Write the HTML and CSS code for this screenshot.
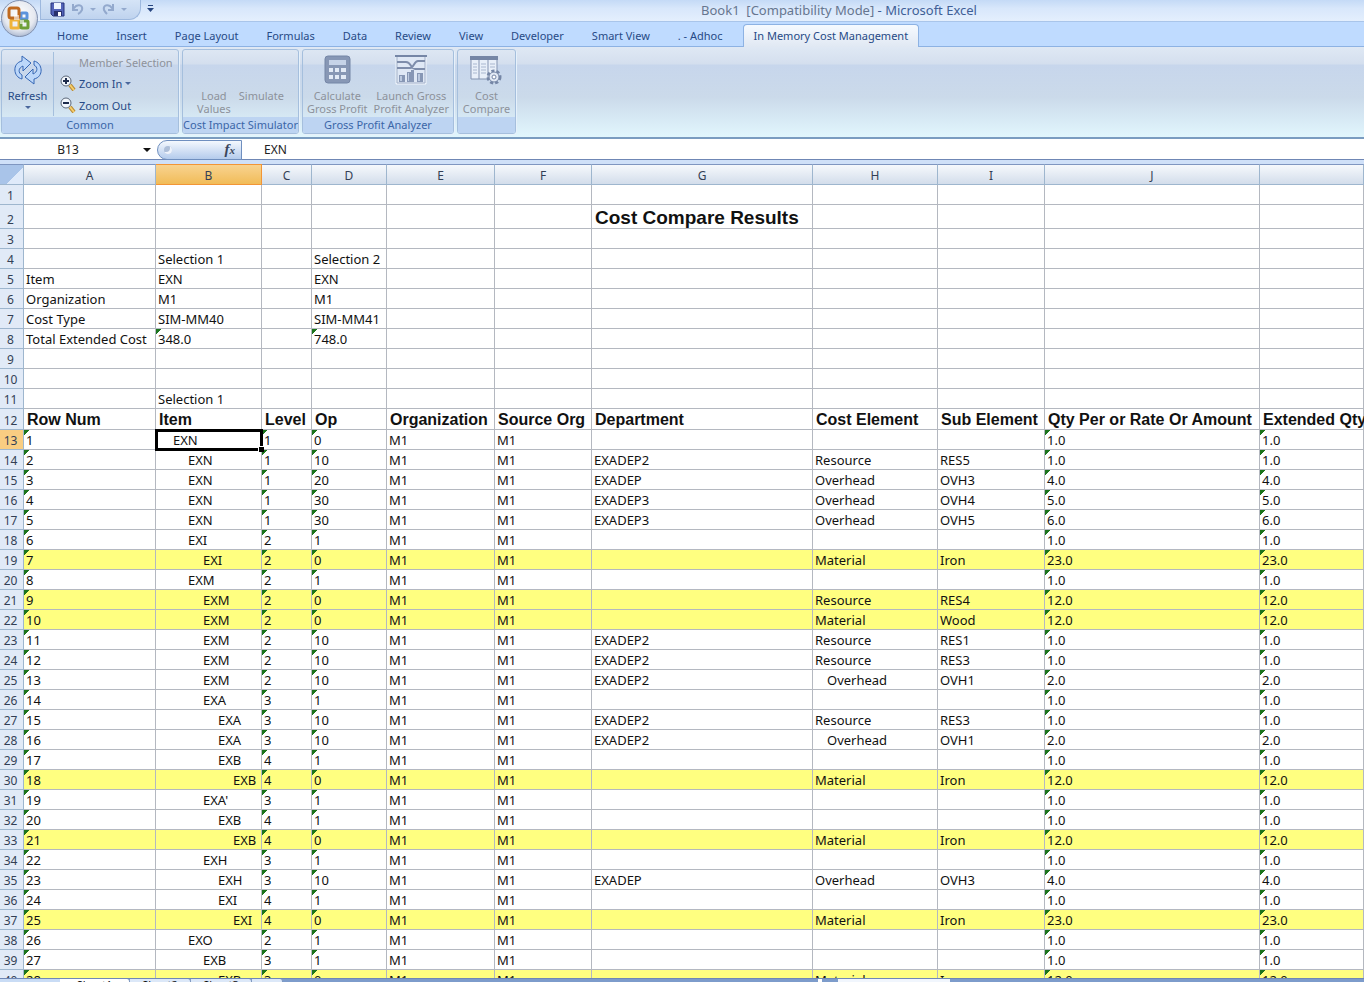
FILE: index.html
```html
<!DOCTYPE html>
<html lang="en">
<head>
    <meta charset="UTF-8">
    <meta name="viewport" content="width=device-width, initial-scale=1.0">
    <title>Book1 [Compatibility Mode] - Microsoft Excel</title>
    <link rel="stylesheet" href="styles.css">
    <script src="sheet.js" defer></script>
</head>
<body>
    <header class="titlebar">
        <div class="quick-access">
            <button class="icon-button" aria-label="Save">
                <svg width="15" height="15" viewBox="0 0 15 15">
                    <path d="M1 1h13v13H3l-2-2z" fill="#5263b8" stroke="#26337c"/>
                    <path d="M4 1h7v6H4z" fill="#eef4ff"/>
                    <path d="M4 9h8v5H4z" fill="#28306c"/>
                    <path d="M8 10h3v4H8z" fill="#fff"/>
                </svg>
            </button>
            <button class="icon-button" aria-label="Undo">
                <svg width="13" height="13" viewBox="0 0 13 13" fill="none" stroke="#93a9cd" stroke-width="2">
                    <path d="M2 1v6h5M2 6l3-3c4-2 7 0 6 4-1 2-2 3-4 4"/>
                </svg>
            </button>
            <span class="caret muted"></span>
            <button class="icon-button" aria-label="Redo">
                <svg width="13" height="13" viewBox="0 0 13 13" fill="none" stroke="#93a9cd" stroke-width="2">
                    <path d="M11 1v6H6M11 6L8 3C4 1 1 3 2 7c1 2 2 3 3 4"/>
                </svg>
            </button>
            <span class="caret muted"></span>
        </div>
        <button class="customize" aria-label="Customize Quick Access Toolbar">
            <svg width="7" height="8" viewBox="0 0 7 8" fill="#27457f"><path d="M1 0h5v1H1zM0 3h7L3.500 7z"/></svg>
        </button>
        <h1 class="title"><span>Book1&nbsp; [Compatibility Mode]</span> - Microsoft Excel</h1>
    </header>
    <button class="office-button" aria-label="Office Button">
        <svg width="38" height="38" viewBox="0 0 38 38">
            <defs>
                <radialGradient id="orb" cx="50%" cy="40%" r="60%">
                    <stop offset="0" stop-color="#ffffff"/>
                    <stop offset="0.700" stop-color="#e6e9f0"/>
                    <stop offset="1" stop-color="#aebbd2"/>
                </radialGradient>
            </defs>
            <circle cx="19.500" cy="18.500" r="18" fill="url(#orb)" stroke="#7f8fae"/>
            <g fill="none" stroke-width="3">
                <rect x="21" y="13" width="6" height="6" rx="1" stroke="#5b93dc"/>
                <rect x="11" y="20" width="8" height="8" rx="1" stroke="#f0b43a"/>
                <rect x="21" y="21" width="7" height="7" rx="1" stroke="#6f9f38"/>
                <rect x="9" y="8" width="10" height="10" rx="2" stroke="#c06a20"/>
            </g>
            <path d="M14 15h5v5h-5zM20 20h4v4h-4z" fill="#fff" fill-opacity="0.600"/>
        </svg>
    </button>

    <nav class="tabs">
        <a class="tab" href="#home">Home</a>
        <a class="tab" href="#insert">Insert</a>
        <a class="tab" href="#layout">Page Layout</a>
        <a class="tab" href="#formulas">Formulas</a>
        <a class="tab" href="#data">Data</a>
        <a class="tab" href="#review">Review</a>
        <a class="tab" href="#view">View</a>
        <a class="tab" href="#developer">Developer</a>
        <a class="tab" href="#smartview">Smart View</a>
        <a class="tab" href="#adhoc">. - Adhoc</a>
        <a class="tab active" href="#cost">In Memory Cost Management</a>
    </nav>

    <section class="ribbon">
        <div class="group common">
            <div class="group-body">
                <button class="big-button refresh">
                    <svg width="30" height="30" viewBox="0 0 30 30" fill="#bcd7fa" stroke="#3566b4" stroke-linejoin="round">
                        <path d="M9 24C0 22-1 8 9 6V1l9 7-8 8v-5c-5 2-5 7-1 9z"/>
                        <path d="M21 6c9 2 10 16 0 18v5l-9-7 8-8v5c5-2 5-7 1-9z"/>
                    </svg>
                    <span>Refresh</span>
                    <span class="caret"></span>
                </button>
                <div class="small-buttons">
                    <button class="small-button disabled">Member Selection</button>
                    <button class="small-button">
                        <svg width="16" height="16" viewBox="0 0 16 16" fill="none">
                            <path d="M10 10l4 5" stroke="#b98a34" stroke-width="4"/>
                            <path d="M10 10l4 5" stroke="#f7cf6c" stroke-width="2"/>
                            <circle cx="6" cy="6" r="5" fill="#f2f7fd" stroke="#5d6879"/>
                            <path d="M3 6h6M6 3v6" stroke="#1e2c4c" stroke-width="2"/>
                        </svg>
                        Zoom In <span class="caret"></span>
                    </button>
                    <button class="small-button">
                        <svg width="16" height="16" viewBox="0 0 16 16" fill="none">
                            <path d="M10 10l4 5" stroke="#b98a34" stroke-width="4"/>
                            <path d="M10 10l4 5" stroke="#f7cf6c" stroke-width="2"/>
                            <circle cx="6" cy="6" r="5" fill="#f2f7fd" stroke="#5d6879"/>
                            <path d="M3 6h6" stroke="#1e2c4c" stroke-width="2"/>
                        </svg>
                        Zoom Out
                    </button>
                </div>
            </div>
            <div class="group-label">Common</div>
        </div>
        <div class="group simulator">
            <div class="group-body">
                <button class="big-button disabled">Load<br>Values</button>
                <button class="big-button disabled">Simulate<br>&nbsp;</button>
            </div>
            <div class="group-label">Cost Impact Simulator</div>
        </div>
        <div class="group analyzer">
            <div class="group-body">
                <button class="big-button disabled">
                    <svg width="28" height="30" viewBox="0 0 28 30">
                        <rect x="2" y="1" width="25" height="27" rx="3" fill="#8797b5" stroke="#7586a6"/>
                        <path d="M6 5h17v5H6z" fill="#c6d3e8"/>
                        <path d="M6 13h4v4H6zM12 13h4v4h-4zM18 13h5v4h-5zM6 20h4v4H6zM12 20h4v4h-4zM18 20h5v4h-5z" fill="#e2eaf6"/>
                    </svg>
                    <span>Calculate<br>Gross Profit</span>
                </button>
                <button class="big-button disabled">
                    <svg width="32" height="30" viewBox="0 0 32 30">
                        <path d="M1 1h30v28H1z" fill="#dfe8f5" stroke="#f1f6fc"/>
                        <path d="M2 1v27h28V1" fill="none" stroke="#a3b1c9"/>
                        <path d="M0 1h32" stroke="#7586a6" stroke-width="2"/>
                        <path d="M2 7h9c5 0 5 7 9 7h10M2 13h13c4 0 4-7 8-7h7" fill="none" stroke="#7e8dab" stroke-width="2"/>
                        <path d="M4 20h6v7H4zM12 17h4v10h-4zM16 15h3v12h-3zM22 18h6v9h-6z" fill="#8797b5"/>
                        <path d="M5 21h2v5H5zM13 18h1v8h-1zM23 19h2v7h-2z" fill="#bccae0"/>
                    </svg>
                    <span>Launch Gross<br>Profit Analyzer</span>
                </button>
            </div>
            <div class="group-label">Gross Profit Analyzer</div>
        </div>
        <div class="group compare">
            <div class="group-body">
                <button class="big-button disabled">
                    <svg width="32" height="30" viewBox="0 0 32 30">
                        <path d="M1 2h26v22H1z" fill="#e8eff9" stroke="#8393b1"/>
                        <path d="M0 1h28v4H0z" fill="#7586a6"/>
                        <path d="M9 5v19M18 5v19" stroke="#8393b1"/>
                        <path d="M3 9h4M3 12h4M3 15h4M3 18h4M11 9h5M11 12h5M11 15h5M11 18h5M20 9h5M20 12h5" stroke="#a9b7cf"/>
                        <circle cx="24" cy="22" r="6" fill="none" stroke="#7586a6" stroke-width="3" stroke-dasharray="3 2"/>
                        <circle cx="24" cy="22" r="5" fill="#e3eaf5" stroke="#7586a6"/>
                        <circle cx="24" cy="22" r="2" fill="#fff" stroke="#7586a6"/>
                    </svg>
                    <span>Cost<br>Compare</span>
                </button>
            </div>
            <div class="group-label"></div>
        </div>
    </section>

    <div class="formula-bar">
        <input class="name-box" type="text" value="B13" aria-label="Name Box">
        <span class="name-arrow"></span>
        <div class="fx"><span class="knob"></span><i>f<small>x</small></i></div>
        <input class="formula" type="text" value="EXN" aria-label="Formula Bar">
    </div>

    <main class="sheet">
        <table class="grid">
            <colgroup>
                <col class="w-head"><col class="w-a"><col class="w-b"><col class="w-c"><col class="w-d"><col class="w-e">
                <col class="w-f"><col class="w-g"><col class="w-h"><col class="w-i"><col class="w-j"><col>
            </colgroup>
            <thead>
                <tr>
                    <th class="corner"></th><th>A</th><th class="selected">B</th><th>C</th><th>D</th><th>E</th>
                    <th>F</th><th>G</th><th>H</th><th>I</th><th>J</th><th></th>
                </tr>
            </thead>
            <tbody id="rows"></tbody>
        </table>
    </main>

    <footer class="sheet-tabs">
        <span class="sheet-nav"></span>
        <a class="sheet-tab current" href="#sheet1">Sheet1</a>
        <a class="sheet-tab" href="#sheet2">Sheet2</a>
        <a class="sheet-tab" href="#sheet3">Sheet3</a>
        <span class="sheet-tab new-sheet"></span>
        <span class="scroll-track"><span class="scroll-thumb"></span></span>
    </footer>
</body>
</html>
```
FILE: styles.css
```css
* {
    box-sizing: border-box;
}
body {
    margin: 0;
    height: 100vh;
    display: flex;
    flex-direction: column;
    overflow: hidden;
    position: relative;
    font-family: "Noto Sans", "Open Sans", sans-serif;
    font-size: 11px;
    color: #274a86;
    background: #bfdbff;
}
button, input {
    font: inherit;
    color: inherit;
    background: none;
    border: none;
    padding: 0;
    margin: 0;
}
a {
    color: inherit;
    text-decoration: none;
}
svg {
    display: block;
}

/* Title bar */
.titlebar {
    flex: none;
    display: flex;
    align-items: flex-start;
    height: 22px;
    padding-left: 40px;
    background: linear-gradient(#c4daf6, #d8e7fb 40%, #e4effd);
    border-bottom: 1px solid #a9c5ea;
}
.quick-access {
    display: flex;
    align-items: center;
    gap: 6px;
    width: 101px;
    height: 20px;
    padding-left: 9px;
    background: linear-gradient(#d5e4f7, #bfd3ee);
    border: 1px solid #9db8de;
    border-top: none;
    border-radius: 0 0 12px 0;
}
.customize {
    margin: 5px 0 0 6px;
}
.title {
    flex: 1;
    margin: 0;
    padding-left: 220px;
    padding-right: 60px;
    font-size: 13px;
    font-weight: normal;
    line-height: 21px;
    text-align: center;
    color: #3f5f97;
}
.title span {
    color: #66768f;
}
.caret {
    display: inline-block;
    border: 3px solid transparent;
    border-top-color: #4a679c;
    border-bottom: none;
}
.caret.muted {
    border-top-color: #93a9cd;
}
.office-button {
    position: absolute;
    left: 0;
    top: 0;
    z-index: 2;
}

/* Ribbon tabs */
.tabs {
    flex: none;
    display: flex;
    align-items: flex-end;
    height: 25px;
    padding-left: 45px;
    background: #bfdbff;
    border-bottom: 1px solid #8db2e3;
}
.tab {
    padding: 0 12px;
    margin-right: 4px;
    line-height: 20px;
    white-space: nowrap;
}
.tab.active {
    height: 23px;
    padding: 0 10px;
    margin-left: 4px;
    margin-bottom: -1px;
    line-height: 22px;
    background: linear-gradient(#f6faff, #e0e8f3);
    border: 1px solid #8db2e3;
    border-bottom: none;
    border-radius: 4px 4px 0 0;
}

/* Ribbon */
.ribbon {
    flex: none;
    display: flex;
    gap: 3px;
    height: 92px;
    padding: 2px 1px 3px;
    background: linear-gradient(#dfe8f4, #d4dfee 17px, #c7d6ec 18px, #cbdaea 50px, #e1f6fd);
    border-bottom: 2px solid #7a9cc0;
}
.group {
    display: flex;
    flex-direction: column;
    border: 1px solid #a5bfdd;
    border-radius: 3px;
    box-shadow: 1px 1px #e6f1fb;
    overflow: hidden;
}
.common {
    width: 178px;
}
.simulator {
    width: 117px;
}
.analyzer {
    width: 152px;
}
.compare {
    width: 59px;
}
.group-body {
    flex: 1;
    min-height: 0;
    display: flex;
    justify-content: center;
}
.group-label {
    flex: none;
    height: 16px;
    line-height: 16px;
    text-align: center;
    white-space: nowrap;
    background: #bdd4f2;
    color: #3b66a8;
}
.big-button {
    display: flex;
    flex-direction: column;
    align-items: center;
    justify-content: flex-end;
    gap: 4px;
    padding: 0 4px 2px;
    line-height: 13px;
    white-space: nowrap;
}
.analyzer .big-button {
    padding: 0 3px 2px;
}
.refresh {
    width: 51px;
    padding-bottom: 8px;
}
.disabled {
    color: #8d929b;
}
.common .group-body {
    justify-content: flex-start;
}
.small-buttons {
    flex: 1;
    display: flex;
    flex-direction: column;
    margin: 2px 0 1px;
    padding-left: 6px;
    border-left: 1px solid #a5bfdd;
}
.small-button {
    display: flex;
    align-items: center;
    gap: 3px;
    height: 22px;
    white-space: nowrap;
}
.small-button.disabled {
    padding-left: 19px;
    height: 20px;
}

/* Formula bar */
.formula-bar {
    flex: none;
    display: flex;
    align-items: center;
    height: 25px;
    background: #fff;
    border-bottom: 4px solid #cfe0f8;
    box-shadow: inset 0 -1px #6f87b5;
    color: #222;
    font-size: 12px;
}
.name-box {
    width: 136px;
    text-align: center;
}
.name-arrow {
    margin: 0 6px 0 7px;
    border: 4px solid transparent;
    border-top-color: #111;
    border-bottom: none;
}
.fx {
    display: flex;
    align-items: center;
    justify-content: space-between;
    width: 85px;
    height: 20px;
    padding: 0 6px;
    border: 1px solid #6f8fbf;
    border-radius: 10px 0 0 10px;
    background: linear-gradient(#f4f8fe, #b4cbec);
    font-family: "Liberation Serif", serif;
    font-size: 15px;
    font-weight: bold;
    color: #3a465c;
}
.fx small {
    font-size: 11px;
}
.knob {
    width: 8px;
    height: 8px;
    border-radius: 50%;
    background: #aebfd9;
    box-shadow: inset -2px -2px #eef3fb;
}
.formula {
    flex: 1;
    padding-left: 22px;
}

/* Cells */
.sheet {
    flex: 1;
    min-height: 0;
    overflow: hidden;
    background: #fff;
}
.grid {
    width: 100%;
    table-layout: fixed;
    border-collapse: separate;
    border-spacing: 0;
    color: #111;
    font-size: 13px;
}
.w-head { width: 24px; }
.w-a { width: 132px; }
.w-b { width: 106px; }
.w-c { width: 50px; }
.w-d { width: 75px; }
.w-e { width: 108px; }
.w-f { width: 97px; }
.w-g { width: 221px; }
.w-h { width: 125px; }
.w-i { width: 107px; }
.w-j { width: 215px; }
.grid th {
    padding: 2px 0 0;
    line-height: 17px;
    font-size: 12px;
    font-weight: normal;
    color: #333f55;
}
.grid thead th {
    height: 21px;
    background: linear-gradient(#f6f9fc, #d3ddeb);
    border-top: 1px solid #7f96c0;
    border-right: 1px solid #9eb6ce;
    border-bottom: 1px solid #9eb6ce;
}
.grid thead .corner {
    background: linear-gradient(135deg, #a9c4e9 60%, #dfeafa 60%);
}
.grid thead .selected {
    background: linear-gradient(#f8d390, #f1bc58);
    border-color: #f29536;
}
.grid tbody th {
    padding-right: 2px;
    background: #e1eaf7;
    border-right: 1px solid #9eb6ce;
    border-bottom: 1px solid #9eb6ce;
}
.grid tbody .selected {
    background: #f9cd82;
}
.grid td {
    height: 20px;
    padding: 2px 2px 0;
    line-height: 17px;
    white-space: nowrap;
    border-right: 1px solid #b4b8c0;
    border-bottom: 1px solid #b4b8c0;
}
.grid .title-row th {
    padding-top: 6px;
}
.grid .title-row td {
    height: 24px;
    font: bold 19px/21px "Liberation Sans", sans-serif;
    padding-left: 3px;
}
.grid .heading-row td {
    height: 21px;
    font: bold 16px/18px "Liberation Sans", sans-serif;
    padding: 2px 0 0 3px;
}
.grid .highlight td {
    background-color: #ffff80;
}
.grid .text-number {
    background-image: linear-gradient(135deg, #1c741c 4px, transparent 4px);
}
.grid .active-cell {
    outline: 3px solid #000;
    outline-offset: -2px;
    position: relative;
}
.active-cell::after {
    content: "";
    position: absolute;
    right: -3px;
    bottom: -3px;
    width: 5px;
    height: 5px;
    background: #000;
    border: solid #fff;
    border-width: 1px 0 0 1px;
}
.indent-1 { text-indent: 15px; }
.indent-2 { text-indent: 30px; }
.indent-3 { text-indent: 45px; }
.indent-4 { text-indent: 60px; }
.indent-5 { text-indent: 75px; }
.nested { text-indent: 12px; }

/* Sheet tabs, mostly below the window edge */
.sheet-tabs {
    flex: none;
    display: flex;
    height: 4px;
    overflow: hidden;
    background: #7d9ccb;
    border-top: 1px solid #6f87b5;
    color: #111;
}
.sheet-nav {
    width: 60px;
    background: #c9dcf5;
}
.sheet-tab {
    width: 61px;
    text-align: center;
    line-height: 12px;
    background: #dce8f8;
    border-right: 1px solid #7d96bd;
    border-radius: 0 4px 0 0;
}
.sheet-tab.current {
    width: 70px;
    background: #fff;
}
.new-sheet {
    width: 31px;
}
.scroll-track {
    flex: 1;
    margin-left: 535px;
    padding-left: 16px;
    border-left: 4px solid #fff;
}
.scroll-thumb {
    display: block;
    width: 112px;
    height: 4px;
    background: #f1f6fd;
}
```
FILE: sheet.js
```js
// Row: item, indent, level, op, department, cost element, sub element, quantity
const results = [
    ['EXN', 1, '1', '0', '', '', '', '1.0'],
    ['EXN', 2, '1', '10', 'EXADEP2', 'Resource', 'RES5', '1.0'],
    ['EXN', 2, '1', '20', 'EXADEP', 'Overhead', 'OVH3', '4.0'],
    ['EXN', 2, '1', '30', 'EXADEP3', 'Overhead', 'OVH4', '5.0'],
    ['EXN', 2, '1', '30', 'EXADEP3', 'Overhead', 'OVH5', '6.0'],
    ['EXI', 2, '2', '1', '', '', '', '1.0'],
    ['EXI', 3, '2', '0', '', 'Material', 'Iron', '23.0', 'highlight'],
    ['EXM', 2, '2', '1', '', '', '', '1.0'],
    ['EXM', 3, '2', '0', '', 'Resource', 'RES4', '12.0', 'highlight'],
    ['EXM', 3, '2', '0', '', 'Material', 'Wood', '12.0', 'highlight'],
    ['EXM', 3, '2', '10', 'EXADEP2', 'Resource', 'RES1', '1.0'],
    ['EXM', 3, '2', '10', 'EXADEP2', 'Resource', 'RES3', '1.0'],
    ['EXM', 3, '2', '10', 'EXADEP2', '>Overhead', 'OVH1', '2.0'],
    ['EXA', 3, '3', '1', '', '', '', '1.0'],
    ['EXA', 4, '3', '10', 'EXADEP2', 'Resource', 'RES3', '1.0'],
    ['EXA', 4, '3', '10', 'EXADEP2', '>Overhead', 'OVH1', '2.0'],
    ['EXB', 4, '4', '1', '', '', '', '1.0'],
    ['EXB', 5, '4', '0', '', 'Material', 'Iron', '12.0', 'highlight'],
    ["EXA'", 3, '3', '1', '', '', '', '1.0'],
    ['EXB', 4, '4', '1', '', '', '', '1.0'],
    ['EXB', 5, '4', '0', '', 'Material', 'Iron', '12.0', 'highlight'],
    ['EXH', 3, '3', '1', '', '', '', '1.0'],
    ['EXH', 4, '3', '10', 'EXADEP', 'Overhead', 'OVH3', '4.0'],
    ['EXI', 4, '4', '1', '', '', '', '1.0'],
    ['EXI', 5, '4', '0', '', 'Material', 'Iron', '23.0', 'highlight'],
    ['EXO', 2, '2', '1', '', '', '', '1.0'],
    ['EXB', 3, '3', '1', '', '', '', '1.0'],
    ['EXB', 4, '3', '0', '', 'Material', 'Iron', '12.0', 'highlight']
];

const summary = [
    [],
    ['', '', '', '', '', '', 'Cost Compare Results'],
    [],
    ['', 'Selection 1', '', 'Selection 2'],
    ['Item', 'EXN', '', 'EXN'],
    ['Organization', 'M1', '', 'M1'],
    ['Cost Type', 'SIM-MM40', '', 'SIM-MM41'],
    ['Total Extended Cost', '348.0', '', '748.0'],
    [],
    [],
    ['', 'Selection 1'],
    ['Row Num', 'Item', 'Level', 'Op', 'Organization', 'Source Org', 'Department',
        'Cost Element', 'Sub Element', 'Qty Per or Rate Or Amount', 'Extended Qty']
];

const body = document.getElementById('rows');

function addRow(cells, rowClass) {
    const tr = body.insertRow();
    tr.className = rowClass || '';
    const th = document.createElement('th');
    th.textContent = body.rows.length;
    tr.appendChild(th);
    for (let i = 0; i < 11; i++) {
        const td = tr.insertCell();
        const text = cells[i] || '';
        td.textContent = text.replace('>', '');
        if (text.startsWith('>')) td.classList.add('nested');
        if (/^[\d.]+$/.test(text)) td.classList.add('text-number');
    }
    return tr;
}

summary.forEach((cells, i) => {
    addRow(cells, i === 1 ? 'title-row' : i === 11 ? 'heading-row' : '');
});

results.forEach(([item, indent, level, op, dept, element, sub, qty, rowClass], i) => {
    const tr = addRow([String(i + 1), item, level, op, 'M1', 'M1', dept, element, sub, qty, qty], rowClass);
    tr.cells[2].classList.add('indent-' + indent);
    if (i === 0) {
        tr.cells[0].classList.add('selected');
        tr.cells[2].classList.add('active-cell');
    }
});
```
